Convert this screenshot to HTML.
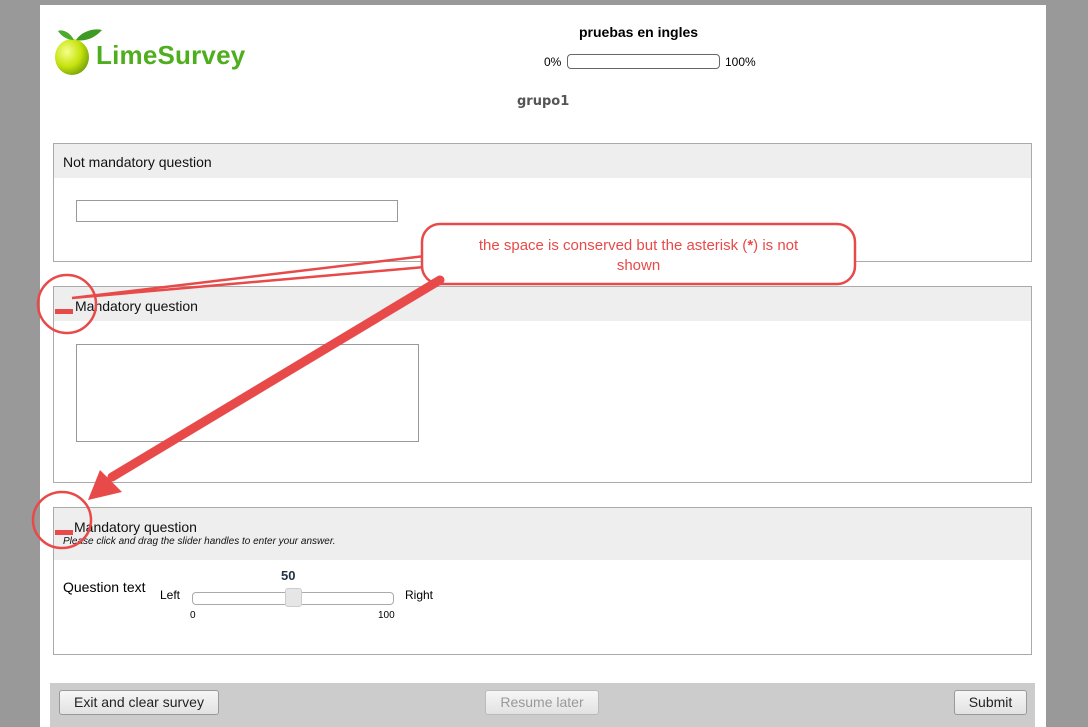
<!DOCTYPE html>
<html><head><meta charset="utf-8"><style>
body{margin:0;width:1088px;height:727px;background:#999;font-family:"Liberation Sans",Arial,sans-serif;position:relative;overflow:hidden}
.page{position:absolute;left:40px;top:5px;width:1006px;height:722px;background:#fff}
.a{position:absolute}
.q{position:absolute;left:53px;width:977px;border:1px solid #aaa;background:#fff}
.qh{background:#eee;font-size:14px;color:#111}
.btn{position:absolute;top:690px;height:23px;border:1px solid #999;border-radius:3px;background:linear-gradient(#f6f6f6,#e2e2e2);font-size:14px;line-height:23px;text-align:center;color:#222}
</style></head><body>
<div class="page"></div>
<!-- logo -->
<svg class="a" style="left:50px;top:24px" width="56" height="54" viewBox="0 0 56 54">
<defs><radialGradient id="g" cx="35%" cy="35%" r="70%"><stop offset="0" stop-color="#f4ff8a"/><stop offset="0.6" stop-color="#c6e20d"/><stop offset="1" stop-color="#7aa50a"/></radialGradient></defs>
<ellipse cx="22" cy="33" rx="17" ry="18" fill="url(#g)"/>
<path d="M24 16 C 20 8, 12 5, 8 7 C 12 13, 18 16, 24 16Z" fill="#4caa2c"/>
<path d="M26 16 C 32 7, 44 4, 52 6 C 46 13, 36 18, 26 16Z" fill="#3e9a24"/>
</svg>
<div class="a" style="left:96px;top:40px;font-size:26px;font-weight:bold;color:#4fae1d;letter-spacing:0.2px">LimeSurvey</div>
<div class="a" style="left:579px;top:24px;font-size:14px;font-weight:bold;color:#000">pruebas en ingles</div>
<div class="a" style="left:544px;top:55px;font-size:12px">0%</div>
<div class="a" style="left:567px;top:54px;width:151px;height:13px;border:1px solid #666;border-radius:4px"></div>
<div class="a" style="left:725px;top:55px;font-size:12px">100%</div>
<div class="a" style="left:517px;top:94px;font-size:13px;font-weight:bold;color:#555;font-family:'DejaVu Sans',sans-serif">grupo1</div>

<div class="q" style="top:143px;height:117px">
<div class="qh" style="height:34px;line-height:36px;padding-left:9px">Not mandatory question</div>
<div class="a" style="left:22px;top:56px;width:320px;height:20px;border:1px solid #999"></div>
</div>
<div class="q" style="top:286px;height:195px">
<div class="qh" style="height:34px;line-height:38px;padding-left:21px">Mandatory question</div>
<div class="a" style="left:22px;top:57px;width:341px;height:96px;border:1px solid #999"></div>
</div>
<div class="q" style="top:507px;height:146px">
<div class="qh" style="height:52px;padding-left:20px"><div style="padding-top:11px">Mandatory question</div><div style="font-size:10px;font-style:italic;margin-left:-11px;margin-top:1px">Please click and drag the slider handles to enter your answer.</div></div>
<div class="a" style="left:9px;top:71px;font-size:14px">Question text</div>
<div class="a" style="left:227px;top:60px;font-size:13px;font-weight:bold;color:#234">50</div>
<div class="a" style="left:106px;top:80px;font-size:12px">Left</div>
<div class="a" style="left:138px;top:84px;width:200px;height:11px;border:1px solid #aaa;border-radius:4px"></div>
<div class="a" style="left:231px;top:80px;width:15px;height:17px;border:1px solid #ccc;border-radius:3px;background:#e6e6e6"></div>
<div class="a" style="left:351px;top:80px;font-size:12px">Right</div>
<div class="a" style="left:136px;top:102px;font-size:10px">0</div>
<div class="a" style="left:324px;top:102px;font-size:10px">100</div>
</div>

<div class="a" style="left:50px;top:683px;width:985px;height:44px;background:#ccc"></div>
<div class="btn" style="left:59px;width:158px">Exit and clear survey</div>
<div class="btn" style="left:485px;width:112px;color:#999;border-color:#bbb">Resume later</div>
<div class="btn" style="left:954px;width:71px">Submit</div>

<svg class="a" style="left:0;top:0" width="1088" height="727">
<g fill="none" stroke="#e84a4a" stroke-width="2.5">
<path d="M425 256 L72 298 L425 267"/>
<rect x="422" y="224" width="433" height="60" rx="18" fill="#fff"/>
<ellipse cx="67" cy="304" rx="29" ry="29"/>
<ellipse cx="62" cy="520" rx="29" ry="28"/>
</g>
<path d="M440 280 L112 477" stroke="#e84a4a" stroke-width="9" stroke-linecap="round"/>
<polygon points="88,500 100,470 122,492" fill="#e84a4a"/>
<rect x="55" y="309" width="18" height="5" fill="#e84a4a"/>
<rect x="55" y="530" width="18" height="5" fill="#e84a4a"/>
</svg>
<div class="a" style="left:422px;top:236px;width:433px;text-align:center;font-size:15px;line-height:20px;color:#e84a4a;font-family:'Liberation Sans Narrow','Liberation Sans',sans-serif">the space is conserved but the asterisk (<b>*</b>) is not<br>shown</div>
</body></html>
